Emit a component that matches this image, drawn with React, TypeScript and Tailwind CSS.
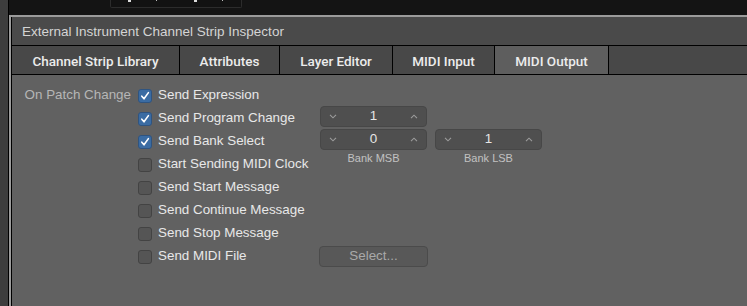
import React from "react";

const font = "font-['Liberation_Sans',Arial,sans-serif]";

const Chevron: React.FC<{ up?: boolean }> = ({ up }) => (
  <svg width="8" height="5" viewBox="0 0 8 5" className="shrink-0">
    <path
      d={up ? "M1 4.2 L4 1.2 L7 4.2" : "M1 0.8 L4 3.8 L7 0.8"}
      fill="none"
      stroke="#9c9c9c"
      strokeWidth="1.1"
    />
  </svg>
);

const Stepper: React.FC<{ value: string }> = ({ value }) => (
  <div className="flex h-[21px] w-[107px] items-center justify-between rounded-[4px] border border-[#474747] bg-[#4f4f4f] px-[8px]">
    <Chevron />
    <span className="text-[13.4px] text-[#e6e6e6]">{value}</span>
    <Chevron up />
  </div>
);

const Checkbox: React.FC<{ checked: boolean }> = ({ checked }) =>
  checked ? (
    <div className="flex h-[14px] w-[14px] items-center justify-center rounded-[3px] border border-[#2f5480] bg-[#3b6ca3]">
      <svg width="10" height="10" viewBox="0 0 10 10">
        <path d="M1.8 5.2 L4 7.8 L8.4 1.6" fill="none" stroke="#ffffff" strokeWidth="1.6" strokeLinecap="round" strokeLinejoin="round" />
      </svg>
    </div>
  ) : (
    <div className="h-[14px] w-[14px] rounded-[3px] border border-[#434343] bg-[#555555]" />
  );

const App: React.FC = () => {
  const tabs = [
    { id: 1, label: "Channel Strip Library", w: "w-[167px]" },
    { id: 2, label: "Attributes", w: "w-[99px]" },
    { id: 3, label: "Layer Editor", w: "w-[112px]" },
    { id: 4, label: "MIDI Input", w: "w-[101px]" },
    { id: 5, label: "MIDI Output", w: "w-[113px]", active: true },
  ];

  const options = [
    { id: 1, label: "Send Expression", checked: true },
    { id: 2, label: "Send Program Change", checked: true },
    { id: 3, label: "Send Bank Select", checked: true },
    { id: 4, label: "Start Sending MIDI Clock", checked: false },
    { id: 5, label: "Send Start Message", checked: false },
    { id: 6, label: "Send Continue Message", checked: false },
    { id: 7, label: "Send Stop Message", checked: false },
    { id: 8, label: "Send MIDI File", checked: false },
  ];

  return (
    <div className={`flex h-[306px] w-[747px] overflow-hidden bg-[#3d3d3d] ${font}`}>
      <div className="w-[8px] shrink-0" />
      <div className="flex flex-1 flex-col bg-black pl-px">
        {/* top bar */}
        <div className="flex h-[15px] shrink-0 bg-[#141414]">
          <div className="ml-[101px] flex h-[8px] w-[132px] items-start gap-[25px] rounded-b-[2px] border border-t-0 border-[#2c2c2c] bg-[#121212] pl-[17px]">
            <div className="h-[2px] w-[3px] bg-[#dcdcdc]" />
            <div className="h-[1px] w-[1px] bg-[#bdbdbd]" />
            <div className="ml-[12px] h-[2px] w-[3px] bg-[#dcdcdc]" />
            <div className="h-[1px] w-[1px] bg-[#bdbdbd]" />
          </div>
        </div>
        <div className="h-[2px] shrink-0 bg-[#9b9b9b]" />
        <div className="flex flex-1 border-l-2 border-[#9b9b9b]">
          <div className="flex flex-1 flex-col bg-black pl-px">
            {/* header */}
            <div className="flex h-[28px] shrink-0 items-center bg-[#4a4a4a] pl-[10px] pt-[2px] text-[13.5px] text-[#d4d4d4]">
              External Instrument Channel Strip Inspector
            </div>
            {/* tabs */}
            <div className="mt-px flex h-[28px] shrink-0 gap-px">
              {tabs.map((tab) => (
                <div
                  key={tab.id}
                  className={`flex items-center justify-center pt-[3px] font-['Roboto',sans-serif] text-[13.5px] font-medium text-[#ececec] ${tab.w} ${
                    tab.active ? "bg-[#5e5e5e]" : "bg-[#484848]"
                  }`}
                >
                  {tab.label}
                </div>
              ))}
              <div className="flex-1 bg-[#484848]" />
            </div>
            {/* content */}
            <div className="mt-px flex flex-1 bg-[#616161] pt-[8px]">
              <div className="mt-px flex w-[308px] shrink-0">
                <div className="w-[126px] pr-[7px] text-right">
                  <div className="flex h-[23px] items-center justify-end text-[13.4px] text-[#b6b6b6]">
                    On Patch Change
                  </div>
                </div>
                <div className="flex flex-col">
                  {options.map((o) => (
                    <div key={o.id} className="flex h-[23px] items-center gap-[6px]">
                      <Checkbox checked={o.checked} />
                      <span className="whitespace-nowrap text-[13.4px] text-[#e8e8e8]">{o.label}</span>
                    </div>
                  ))}
                </div>
              </div>
              <div className="flex flex-col pt-[23px]">
                <Stepper value="1" />
                <div className="mt-[2px] flex gap-[8px]">
                  <div className="flex flex-col items-center">
                    <Stepper value="0" />
                    <span className="mt-[2px] text-[11px] leading-[13px] text-[#c2c2c2]">Bank MSB</span>
                  </div>
                  <div className="flex flex-col items-center">
                    <Stepper value="1" />
                    <span className="mt-[2px] text-[11px] leading-[13px] text-[#c2c2c2]">Bank LSB</span>
                  </div>
                </div>
                <div className="-ml-px mt-[81px] flex h-[21px] w-[109px] items-center justify-center rounded-[4px] border border-[#4b4b4b] bg-[#585858] text-[13.4px] text-[#a9a9a9]">
                  Select...
                </div>
              </div>
            </div>
          </div>
        </div>
      </div>
    </div>
  );
};

export default App;
